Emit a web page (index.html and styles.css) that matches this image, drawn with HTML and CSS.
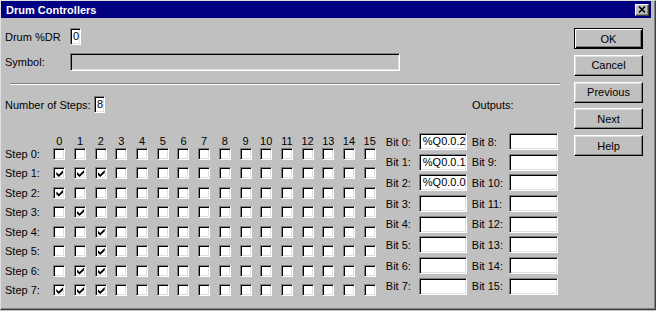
FILE: index.html
```html
<!DOCTYPE html>
<html>
<head>
<meta charset="utf-8">
<title>Drum Controllers</title>
<link rel="stylesheet" href="styles.css">
</head>
<body>
<div class="window">
  <div class="titlebar">
    <span class="title">Drum Controllers</span>
    <span class="close"><svg width="12" height="10" viewBox="0 0 12 10"><path d="M3 1.5 L9 7.5 M9 1.5 L3 7.5" stroke="#000" stroke-width="1.7" fill="none"/></svg></span>
  </div>
  <div class="body">
    <div class="main">
      <div class="row drum"><span class="lbl lbl-a">Drum %DR</span><span class="edit tiny">0</span></div>
      <div class="row symbol"><span class="lbl lbl-a">Symbol:</span><span class="edit disabled wide"></span></div>
      <div class="sep"></div>
      <div class="row steps"><span class="lbl lbl-b">Number of Steps:</span><span class="edit tiny">8</span><span class="outputs">Outputs:</span></div>
      <div class="tables">
        <div class="matrix">
          <div class="mgrid mhead">
            <span></span><span>0</span><span>1</span><span>2</span><span>3</span><span>4</span><span>5</span><span>6</span><span>7</span><span>8</span><span>9</span><span>10</span><span>11</span><span>12</span><span>13</span><span>14</span><span>15</span>
          </div>
          <div class="mgrid mbody">
            <span class="step">Step 0:</span><span class="cb"></span><span class="cb"></span><span class="cb"></span><span class="cb"></span><span class="cb"></span><span class="cb"></span><span class="cb"></span><span class="cb"></span><span class="cb"></span><span class="cb"></span><span class="cb"></span><span class="cb"></span><span class="cb"></span><span class="cb"></span><span class="cb"></span><span class="cb"></span>
            <span class="step">Step 1:</span><span class="cb on"></span><span class="cb on"></span><span class="cb on"></span><span class="cb"></span><span class="cb"></span><span class="cb"></span><span class="cb"></span><span class="cb"></span><span class="cb"></span><span class="cb"></span><span class="cb"></span><span class="cb"></span><span class="cb"></span><span class="cb"></span><span class="cb"></span><span class="cb"></span>
            <span class="step">Step 2:</span><span class="cb on"></span><span class="cb"></span><span class="cb"></span><span class="cb"></span><span class="cb"></span><span class="cb"></span><span class="cb"></span><span class="cb"></span><span class="cb"></span><span class="cb"></span><span class="cb"></span><span class="cb"></span><span class="cb"></span><span class="cb"></span><span class="cb"></span><span class="cb"></span>
            <span class="step">Step 3:</span><span class="cb"></span><span class="cb on"></span><span class="cb"></span><span class="cb"></span><span class="cb"></span><span class="cb"></span><span class="cb"></span><span class="cb"></span><span class="cb"></span><span class="cb"></span><span class="cb"></span><span class="cb"></span><span class="cb"></span><span class="cb"></span><span class="cb"></span><span class="cb"></span>
            <span class="step">Step 4:</span><span class="cb"></span><span class="cb"></span><span class="cb on"></span><span class="cb"></span><span class="cb"></span><span class="cb"></span><span class="cb"></span><span class="cb"></span><span class="cb"></span><span class="cb"></span><span class="cb"></span><span class="cb"></span><span class="cb"></span><span class="cb"></span><span class="cb"></span><span class="cb"></span>
            <span class="step">Step 5:</span><span class="cb"></span><span class="cb"></span><span class="cb on"></span><span class="cb"></span><span class="cb"></span><span class="cb"></span><span class="cb"></span><span class="cb"></span><span class="cb"></span><span class="cb"></span><span class="cb"></span><span class="cb"></span><span class="cb"></span><span class="cb"></span><span class="cb"></span><span class="cb"></span>
            <span class="step">Step 6:</span><span class="cb"></span><span class="cb on"></span><span class="cb on"></span><span class="cb"></span><span class="cb"></span><span class="cb"></span><span class="cb"></span><span class="cb"></span><span class="cb"></span><span class="cb"></span><span class="cb"></span><span class="cb"></span><span class="cb"></span><span class="cb"></span><span class="cb"></span><span class="cb"></span>
            <span class="step">Step 7:</span><span class="cb on"></span><span class="cb on"></span><span class="cb on"></span><span class="cb"></span><span class="cb"></span><span class="cb"></span><span class="cb"></span><span class="cb"></span><span class="cb"></span><span class="cb"></span><span class="cb"></span><span class="cb"></span><span class="cb"></span><span class="cb"></span><span class="cb"></span><span class="cb"></span>
          </div>
        </div>
        <div class="bits">
          <span class="blbl">Bit 0:</span><span class="edit">%Q0.0.2</span><span class="blbl r">Bit 8:</span><span class="edit"></span>
          <span class="blbl">Bit 1:</span><span class="edit">%Q0.0.1</span><span class="blbl r">Bit 9:</span><span class="edit"></span>
          <span class="blbl">Bit 2:</span><span class="edit">%Q0.0.0</span><span class="blbl r">Bit 10:</span><span class="edit"></span>
          <span class="blbl">Bit 3:</span><span class="edit"></span><span class="blbl r">Bit 11:</span><span class="edit"></span>
          <span class="blbl">Bit 4:</span><span class="edit"></span><span class="blbl r">Bit 12:</span><span class="edit"></span>
          <span class="blbl">Bit 5:</span><span class="edit"></span><span class="blbl r">Bit 13:</span><span class="edit"></span>
          <span class="blbl">Bit 6:</span><span class="edit"></span><span class="blbl r">Bit 14:</span><span class="edit"></span>
          <span class="blbl">Bit 7:</span><span class="edit"></span><span class="blbl r">Bit 15:</span><span class="edit"></span>
        </div>
      </div>
    </div>
    <div class="buttons">
      <span class="btn default">OK</span>
      <span class="btn">Cancel</span>
      <span class="btn">Previous</span>
      <span class="btn">Next</span>
      <span class="btn">Help</span>
    </div>
  </div>
</div>
</body>
</html>
```
FILE: styles.css
```css
body {
  margin: 0;
  background: #c0c0c0;
  font-family: "Liberation Sans", Arial, sans-serif;
  font-size: 11px;
  color: #000;
}
.window {
  width: 656px;
  height: 310px;
  box-sizing: border-box;
  border-top: 1px solid #dfdfdf;
  border-left: 1px solid #dfdfdf;
  border-right: 1px solid #404040;
  border-bottom: 1px solid #404040;
  box-shadow: inset -1px -1px 0 #808080;
  padding-right: 4px;
  display: flex;
  flex-direction: column;
  background: #c0c0c0;
}
.titlebar {
  height: 17px;
  flex: none;
  background: #000080;
  color: #fff;
  font-weight: bold;
  font-size: 11px;
  display: flex;
  align-items: center;
  justify-content: space-between;
  padding: 0 2px 0 5px;
}
.close {
  width: 14px;
  height: 12px;
  box-sizing: border-box;
  background: #c0c0c0;
  border: 1px solid;
  border-color: #fff #404040 #404040 #fff;
  box-shadow: inset -1px -1px 0 #808080;
  display: flex;
  align-items: center;
  justify-content: center;
}
.close svg { display: block; }
.body {
  flex: 1;
  display: flex;
}
.main {
  flex: 1;
  padding: 10px 0 0 4px;
}
.row {
  display: flex;
  align-items: center;
  height: 17px;
}
.drum { margin-bottom: 8px; }
.symbol { height: 18px; }
.lbl-a { width: 65px; }
.lbl-b { width: 89px; }
.edit {
  box-sizing: border-box;
  height: 17px;
  background: #fff;
  border-top: 1px solid #808080;
  border-left: 1px solid #808080;
  border-right: 1px solid #fff;
  border-bottom: 1px solid #fff;
  box-shadow: inset 1px 1px 0 #000, inset -1px -1px 0 #dfdfdf;
  padding-left: 3px;
  line-height: 15px;
  white-space: nowrap;
  overflow: hidden;
}
.edit.tiny { width: 11px; padding-left: 2px; }
.edit.wide { width: 330px; height: 18px; }
.edit.disabled { background: #c0c0c0; }
.sep {
  margin: 12px 0 0 5px;
  width: 550px;
  border-top: 1px solid #808080;
  border-bottom: 1px solid #fff;
}
.steps { margin-top: 11px; }
.outputs { margin-left: 367px; }
.tables {
  margin-top: 20px;
  display: flex;
  align-items: flex-start;
}
.matrix { margin-top: 2px; }
.mgrid {
  display: grid;
  grid-template-columns: 44px repeat(16, 20.7px);
}
.mhead {
  height: 12px;
  line-height: 12px;
  text-align: center;
}
.mbody {
  grid-template-rows: repeat(8, 13px);
  row-gap: 6.5px;
}
.step {
  display: flex;
  align-items: center;
  white-space: nowrap;
}
.cb {
  justify-self: center;
  align-self: center;
  position: relative;
  width: 12px;
  height: 12px;
  box-sizing: border-box;
  background: #fff;
  border-top: 1px solid #808080;
  border-left: 1px solid #808080;
  border-right: 1px solid #fff;
  border-bottom: 1px solid #fff;
  box-shadow: inset 1px 1px 0 #000, inset -1px -1px 0 #dfdfdf;
}
.cb.on::after {
  content: "";
  position: absolute;
  left: 2px;
  top: 2px;
  width: 7px;
  height: 7px;
  background: #000;
  clip-path: polygon(0 28.6%, 35.7% 64.3%, 100% 0, 100% 40%, 35.7% 100%, 0 68.6%);
}
.bits {
  margin-left: 5.8px;
  display: grid;
  grid-template-columns: 33px 48px 42px 49px;
  grid-auto-rows: 17px;
  row-gap: 3.7px;
}
.blbl {
  display: flex;
  align-items: center;
  white-space: nowrap;
}
.blbl.r { padding-left: 5px; }
.buttons {
  flex: none;
  width: 69px;
  margin-right: 8px;
  padding-top: 10px;
  display: flex;
  flex-direction: column;
  gap: 5.75px;
}
.btn {
  height: 21px;
  box-sizing: border-box;
  display: flex;
  align-items: center;
  justify-content: center;
  background: #c0c0c0;
  border: 1px solid;
  border-color: #fff #000 #000 #fff;
  box-shadow: inset -1px -1px 0 #808080, inset 1px 1px 0 #dfdfdf;
}
.btn.default {
  border-color: #000;
  box-shadow: inset 1px 1px 0 #fff, inset -1px -1px 0 #000, inset -2px -2px 0 #808080;
}
```
